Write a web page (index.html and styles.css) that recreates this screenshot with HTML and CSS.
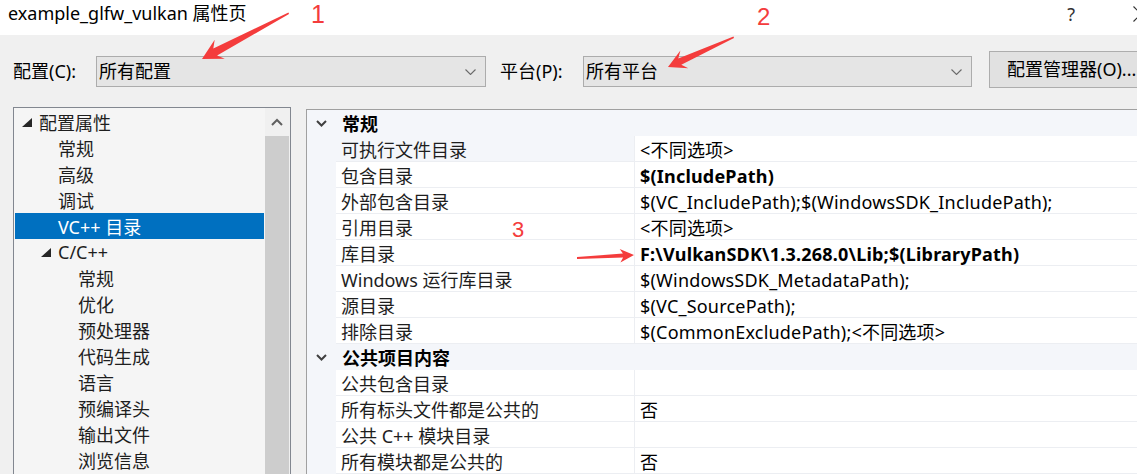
FILE: index.html
```html
<!DOCTYPE html>
<html lang="zh-CN">
<head>
<meta charset="utf-8">
<title>example_glfw_vulkan 属性页</title>
<link rel="stylesheet" href="styles.css">
</head>
<body>
<div class="window">
  <header class="titlebar">
    <span class="title">example_glfw_vulkan 属性页</span>
    <span class="help">?</span>
    <svg class="close" width="16" height="16" viewBox="0 0 16 16"><path d="M0.5 0.5 L15.5 15.5 M15.5 0.5 L0.5 15.5" stroke="#333" stroke-width="1.2" fill="none"/></svg>
  </header>

  <div class="toolbar">
    <span class="lbl lbl-config">配置(C):</span>
    <div class="combo combo-config">
      <span class="combo-text">所有配置</span>
      <svg class="combo-chev" width="11" height="6" viewBox="0 0 11 6"><path d="M0.5 0.5 L5.5 5.5 L10.5 0.5" stroke="#6a6a6a" stroke-width="1.1" fill="none"/></svg>
    </div>
    <span class="lbl lbl-platform">平台(P):</span>
    <div class="combo combo-platform">
      <span class="combo-text">所有平台</span>
      <svg class="combo-chev" width="11" height="6" viewBox="0 0 11 6"><path d="M0.5 0.5 L5.5 5.5 L10.5 0.5" stroke="#6a6a6a" stroke-width="1.1" fill="none"/></svg>
    </div>
    <button class="btn">配置管理器(O)...</button>
  </div>

  <div class="main">
    <div class="tree">
      <ul class="tree-list">
        <li class="node lvl0"><span class="twisty"><svg width="10" height="9" viewBox="0 0 10 9"><polygon points="10,0 10,9 0,9" fill="#262626"/></svg></span>配置属性</li>
        <li class="node lvl1"><span class="twisty"></span>常规</li>
        <li class="node lvl1"><span class="twisty"></span>高级</li>
        <li class="node lvl1"><span class="twisty"></span>调试</li>
        <li class="node lvl1 selected"><span class="twisty"></span>VC++ 目录</li>
        <li class="node lvl1"><span class="twisty"><svg width="10" height="9" viewBox="0 0 10 9"><polygon points="10,0 10,9 0,9" fill="#262626"/></svg></span>C/C++</li>
        <li class="node lvl2"><span class="twisty"></span>常规</li>
        <li class="node lvl2"><span class="twisty"></span>优化</li>
        <li class="node lvl2"><span class="twisty"></span>预处理器</li>
        <li class="node lvl2"><span class="twisty"></span>代码生成</li>
        <li class="node lvl2"><span class="twisty"></span>语言</li>
        <li class="node lvl2"><span class="twisty"></span>预编译头</li>
        <li class="node lvl2"><span class="twisty"></span>输出文件</li>
        <li class="node lvl2"><span class="twisty"></span>浏览信息</li>
      </ul>
      <div class="scrollbar">
        <div class="sb-up"><svg width="12" height="8" viewBox="0 0 12 8"><path d="M1 7 L6 2 L11 7" stroke="#606060" stroke-width="2" fill="none"/></svg></div>
        <div class="sb-thumb"></div>
      </div>
    </div>

    <div class="grid">
      <div class="cat">
        <span class="cat-chev"><svg width="11" height="7" viewBox="0 0 11 7"><path d="M1 1 L5.5 5.5 L10 1" stroke="#404040" stroke-width="2" fill="none"/></svg></span>
        <span class="cat-name">常规</span>
      </div>
      <div class="prop current"><span class="gut"></span><span class="name">可执行文件目录</span><span class="val">&lt;不同选项&gt;</span></div>
      <div class="prop"><span class="gut"></span><span class="name">包含目录</span><span class="val bold">$(IncludePath)</span></div>
      <div class="prop"><span class="gut"></span><span class="name">外部包含目录</span><span class="val">$(VC_IncludePath);$(WindowsSDK_IncludePath);</span></div>
      <div class="prop"><span class="gut"></span><span class="name">引用目录</span><span class="val">&lt;不同选项&gt;</span></div>
      <div class="prop"><span class="gut"></span><span class="name">库目录</span><span class="val bold">F:\VulkanSDK\1.3.268.0\Lib;$(LibraryPath)</span></div>
      <div class="prop"><span class="gut"></span><span class="name">Windows 运行库目录</span><span class="val">$(WindowsSDK_MetadataPath);</span></div>
      <div class="prop"><span class="gut"></span><span class="name">源目录</span><span class="val">$(VC_SourcePath);</span></div>
      <div class="prop"><span class="gut"></span><span class="name">排除目录</span><span class="val">$(CommonExcludePath);&lt;不同选项&gt;</span></div>
      <div class="cat">
        <span class="cat-chev"><svg width="11" height="7" viewBox="0 0 11 7"><path d="M1 1 L5.5 5.5 L10 1" stroke="#404040" stroke-width="2" fill="none"/></svg></span>
        <span class="cat-name">公共项目内容</span>
      </div>
      <div class="prop"><span class="gut"></span><span class="name">公共包含目录</span><span class="val"></span></div>
      <div class="prop"><span class="gut"></span><span class="name">所有标头文件都是公共的</span><span class="val">否</span></div>
      <div class="prop"><span class="gut"></span><span class="name">公共 C++ 模块目录</span><span class="val"></span></div>
      <div class="prop"><span class="gut"></span><span class="name">所有模块都是公共的</span><span class="val">否</span></div>
    </div>
  </div>

  <svg class="annotations" width="1137" height="474" viewBox="0 0 1137 474">
    <polygon fill="#f43c3c" points="288.5,12.5 213.3,48.4 214.7,39.8 202,59 224.8,58.8 217.1,55.4 289,14"/>
    <polygon fill="#f43c3c" points="733.5,36.5 678.3,58.4 680.4,50.6 668,67 688.3,68.3 681.3,64.7 734,38"/>
    <polygon fill="#f43c3c" points="577,257 622.9,253.6 619.7,249 634,255 620.4,262.4 623.1,257.6 577,259"/>
  </svg>
  <span class="num n1">1</span>
  <span class="num n2">2</span>
  <span class="num n3">3</span>
</div>
</body>
</html>
```

FILE: styles.css
```css
html, body {
  margin: 0;
  padding: 0;
}
body {
  width: 1137px;
  height: 474px;
  overflow: hidden;
  background: #f0f0f0;
  font-family: "Noto Sans", "Noto Sans CJK SC", sans-serif;
  font-size: 18px;
  color: #1e1e1e;
}
.window {
  position: relative;
  width: 1137px;
  height: 474px;
  overflow: hidden;
}

/* Title bar */
.titlebar {
  height: 35px;
  background: #ffffff;
  display: flex;
  align-items: flex-start;
  box-sizing: border-box;
}
.title {
  margin-left: 8px;
  line-height: 26px;
  color: #000;
}
.help {
  margin-left: auto;
  margin-right: 58px;
  line-height: 28px;
  color: #333;
  font-size: 18px;
}
.close {
  margin-top: 6px;
  margin-right: -12px;
  flex-shrink: 0;
}

/* Toolbar */
.toolbar {
  height: 72px;
  box-sizing: border-box;
  padding-top: 16px;
  padding-left: 13px;
  display: flex;
  align-items: flex-start;
}
.lbl {
  margin-top: 5px;
  line-height: 31px;
  color: #000;
  flex-shrink: 0;
}
.lbl-config { width: 83px; }
.lbl-platform { width: 83px; margin-left: 14px; }
.combo {
  margin-top: 5px;
  height: 31px;
  box-sizing: border-box;
  border: 1px solid #acacac;
  background: #e5e5e5;
  display: flex;
  align-items: center;
  padding-left: 2px;
  padding-right: 9px;
  flex-shrink: 0;
}
.combo-config { width: 390px; }
.combo-platform { width: 389px; }
.combo-text {
  line-height: 29px;
  color: #000;
}
.combo-chev {
  margin-left: auto;
}
.btn {
  margin-left: 17px;
  height: 37px;
  width: 170px;
  flex-shrink: 0;
  box-sizing: border-box;
  border: 1px solid #adadad;
  background: #e1e1e1;
  font-family: inherit;
  font-size: 18px;
  color: #000;
  text-align: left;
  padding: 0 0 0 17px;
  white-space: nowrap;
  line-height: 35px;
}

/* Main area */
.main {
  display: flex;
  align-items: flex-start;
  padding-left: 13px;
}

/* Tree */
.tree {
  width: 278px;
  height: 380px;
  flex-shrink: 0;
  box-sizing: border-box;
  border: 1px solid #828790;
  background: #f5f5f5;
  display: flex;
}
.tree-list {
  list-style: none;
  margin: 0;
  padding: 1px 1px 0 1px;
  width: 251px;
  box-sizing: border-box;
}
.node {
  height: 26px;
  display: flex;
  align-items: center;
  white-space: nowrap;
  color: #1e1e1e;
}
.twisty {
  width: 17px;
  flex-shrink: 0;
  display: flex;
  align-items: center;
}
.twisty svg { margin-top: 1px; }
.lvl0 { padding-left: 7px; }
.lvl1 { padding-left: 26px; }
.lvl2 { padding-left: 46px; }
.node.selected {
  background: #0070c0;
  color: #ffffff;
}
.scrollbar {
  width: 25px;
  background: #f0f0f0;
  display: flex;
  flex-direction: column;
}
.sb-up {
  height: 28px;
  display: flex;
  align-items: center;
  justify-content: center;
  width: 24px;
}
.sb-thumb {
  width: 24px;
  flex: 1;
  background: #cdcdcd;
}

/* Property grid */
.grid {
  margin-left: 15px;
  margin-top: 2px;
  width: 900px;
  flex-shrink: 0;
  border-left: 1px solid #a0a0a0;
  border-top: 1px solid #a0a0a0;
  background: #ffffff;
}
.cat {
  height: 26px;
  display: flex;
  align-items: center;
  background: #f4f6fa;
}
.cat-chev {
  width: 29px;
  display: flex;
  justify-content: center;
  align-items: center;
}
.cat-name {
  padding-left: 6px;
  font-weight: bold;
  color: #000;
}
.prop {
  height: 26px;
  display: flex;
}
.gut {
  width: 29px;
  flex-shrink: 0;
  background: #f4f6fa;
}
.name, .val {
  box-sizing: border-box;
  border-bottom: 1px solid #eceef2;
  padding-left: 5px;
  line-height: 29px;
  white-space: nowrap;
  color: #1e1e1e;
}
.name {
  width: 299px;
  flex-shrink: 0;
  border-right: 1px solid #eceef2;
}
.prop.current .name {
  background: #f4f6fa;
}
.val {
  flex: 1;
  color: #000;
  letter-spacing: 0.2px;
}
.val.bold {
  font-weight: bold;
}

/* Annotations */
.annotations {
  position: absolute;
  left: 0;
  top: 0;
  pointer-events: none;
}
.num {
  position: absolute;
  font-family: "Liberation Sans", sans-serif;
  line-height: 1;
  color: #f43c3c;
}
.n1 { left: 311px; top: 2px; font-size: 25px; }
.n2 { left: 757px; top: 5px; font-size: 24px; }
.n3 { left: 512px; top: 219px; font-size: 22px; }
```
